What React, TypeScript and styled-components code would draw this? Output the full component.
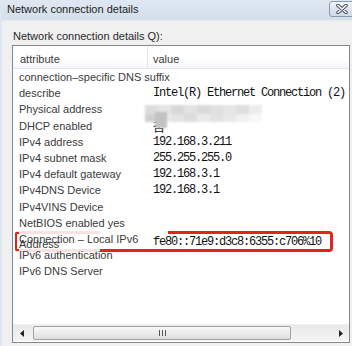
import React from "react";
import styled, { createGlobalStyle } from "styled-components";

const GlobalStyle = createGlobalStyle`
  html, body {
    margin: 0;
    padding: 0;
    width: 352px;
    height: 346px;
    overflow: hidden;
    background: #f0f0f0;
  }
  * { box-sizing: border-box; }
`;

const Window = styled.div`
  width: 352px;
  height: 346px;
  display: flex;
  flex-direction: column;
  background: #f0f0f0;
  border-left: 2px solid #dbe6f1;
  font-family: "Liberation Sans", Arial, sans-serif;
  overflow: hidden;
`;

const TitleBar = styled.div`
  height: 21px;
  display: flex;
  align-items: center;
  justify-content: space-between;
  padding-left: 5px;
  background: linear-gradient(#dfe8f2, #d4dfea);
  border-bottom: 1px solid #e4e9ef;
`;

const Title = styled.span`
  font-size: 11px;
  color: #222;
  margin-top: -3px;
`;

const CloseButton = styled.div`
  width: 27px;
  height: 16px;
  margin-top: -2px;
  margin-right: -4px;
  border: 1px solid #8a99ad;
  border-radius: 3px;
  background: linear-gradient(#f1f5f9, #dbe3ec 55%, #cfd9e4);
  display: flex;
  align-items: center;
  padding-left: 6px;
`;

const Body = styled.div`
  flex: 1;
  display: flex;
  flex-direction: column;
  padding: 9px 2px 3px 10px;
`;

const Caption = styled.div`
  font-size: 11px;
  line-height: 13px;
  color: #2a2a2a;
  margin-left: 1px;
`;

const ListBox = styled.div`
  margin-top: 2px;
  height: 298px;
  border: 1px solid #828790;
  background: #fff;
  display: flex;
  flex-direction: column;
`;

const HeaderRow = styled.div`
  height: 23px;
  display: grid;
  grid-template-columns: 135px 1fr;
  border-bottom: 1px solid #e3e5e8;
  background: linear-gradient(#ffffff, #ffffff 60%, #f6f7f9);
`;

const HeaderCell = styled.div<{ $divider?: boolean }>`
  display: flex;
  align-items: center;
  padding: 3px 0 0 ${(p) => (p.$divider ? 7 : 5)}px;
  font-size: 11px;
  color: #3a3a3a;
  border-right: ${(p) => (p.$divider ? "1px solid #e3e5e8" : "none")};
`;

const Rows = styled.div`
  flex: 1;
  display: flex;
  flex-direction: column;
`;

const Row = styled.div`
  position: relative;
  height: 16.2px;
  display: grid;
  grid-template-columns: 135px 1fr;
  grid-template-rows: 16.2px;
  align-items: center;
`;

const AttrCell = styled.div<{ $wrap?: boolean }>`
  padding-left: 6px;
  font-size: 11px;
  color: #3b3b3b;
  white-space: ${(p) => (p.$wrap ? "normal" : "nowrap")};
  line-height: ${(p) => (p.$wrap ? "5px" : "16px")};
  align-self: ${(p) => (p.$wrap ? "start" : "center")};
  padding-top: ${(p) => (p.$wrap ? "6px" : "0")};
`;

const ValueCell = styled.div<{ $shift?: number }>`
  position: relative;
  top: ${(p) => p.$shift ?? 0}px;
  min-height: 16px;
  padding-left: 5px;
  font-family: "Liberation Mono", "Noto Sans CJK SC", monospace;
  font-size: 12px;
  letter-spacing: -1.2px;
  line-height: 16px;
  color: #111;
  white-space: nowrap;
`;

const Mosaic = styled.div`
  position: absolute;
  z-index: 1;
  left: -3px;
  top: 4px;
  width: 117px;
  height: 17px;
  display: grid;
  grid-template-columns: repeat(9, 1fr);
  grid-template-rows: repeat(2, 1fr);
  filter: blur(1.2px);
`;

const Tile = styled.div<{ $shade: string }>`
  background: ${(p) => p.$shade};
`;

const DarkTile = styled.div`
  position: absolute;
  z-index: 2;
  left: 7px;
  top: 11px;
  width: 12px;
  height: 16px;
  background: #c2c2c2;
  filter: blur(0.8px);
`;

const RedBox = styled.div`
  position: absolute;
  left: 87px;
  top: 0;
  width: 233px;
  height: 21px;
  border: 3px solid #e3241d;
  border-left: none;
  border-radius: 0 4px 4px 0;
  pointer-events: none;
`;

const WhiteOut = styled.div`
  position: absolute;
  left: 87px;
  top: 0;
  width: 68px;
  height: 3px;
  background: #fff;
`;

const FaintLine = styled.div<{ $bottom?: boolean }>`
  position: absolute;
  left: 3px;
  width: 84px;
  height: 3px;
  top: ${(p) => (p.$bottom ? "18px" : "0")};
  background: rgba(235, 120, 110, 0.22);
`;

const Bracket = styled.div`
  position: absolute;
  left: 2px;
  top: 1px;
  width: 4px;
  height: 19px;
  border: 2px solid #e3241d;
  border-right: none;
  border-radius: 2px 0 0 2px;
`;

const HScroll = styled.div`
  height: 17px;
  display: flex;
  align-items: stretch;
  background: linear-gradient(#eaeaea, #f3f3f3);
  border-top: 1px solid #f0f0f0;
  margin-bottom: 1px;
`;

const ArrowButton = styled.div`
  width: 17px;
  display: flex;
  align-items: center;
  justify-content: center;
`;

const Track = styled.div`
  flex: 1;
  display: flex;
  align-items: stretch;
  padding: 1px 0 1px 3px;
`;

const Thumb = styled.div`
  width: 258px;
  border: 1px solid #a3a3a3;
  border-radius: 2px;
  background: linear-gradient(#f7f7f7, #ececec 50%, #dcdcdc);
  display: flex;
  align-items: center;
  justify-content: center;
  gap: 2px;
`;

const Grip = styled.span`
  width: 1px;
  height: 6px;
  background: #555;
`;

const shades = [
  "#dcdcdc", "#e4e4e4", "#d8d8d8", "#e2e2e2", "#dadada", "#e0e0e0", "#e6e6e6", "#dedede", "#ececec",
  "#d0d0d0", "#eaeaea", "#e4e4e4", "#dcdcdc", "#ebebeb", "#e2e2e2", "#e8e8e8", "#f0f0f0", "#f8f8f8",
];

type Item = { attr: string; value?: string; kind?: "blur" | "highlight" };

const items: Item[] = [
  { attr: "connection–specific DNS suffix" },
  { attr: "describe", value: "Intel(R) Ethernet Connection (2)" },
  { attr: "Physical address", kind: "blur" },
  { attr: "DHCP enabled", value: "否" },
  { attr: "IPv4 address", value: "192.168.3.211" },
  { attr: "IPv4 subnet mask", value: "255.255.255.0" },
  { attr: "IPv4 default gateway", value: "192.168.3.1" },
  { attr: "IPv4DNS Device", value: "192.168.3.1" },
  { attr: "IPv4VINS Device" },
  { attr: "NetBIOS enabled yes" },
  { attr: "Connection – Local IPv6 Address", value: "fe80::71e9:d3c8:6355:c706%10", kind: "highlight" },
  { attr: "IPv6 authentication" },
  { attr: "IPv6 DNS Server" },
];

const CloseGlyph = () => (
  <svg width="12" height="10" viewBox="0 0 12 10">
    <path d="M2 1.5 L10 8.5 M10 1.5 L2 8.5" stroke="#4a5260" strokeWidth="3.6" strokeLinecap="round" />
    <path d="M2 1.5 L10 8.5 M10 1.5 L2 8.5" stroke="#ffffff" strokeWidth="1.6" strokeLinecap="round" />
  </svg>
);

const Arrow = ({ dir }: { dir: "left" | "right" }) => (
  <svg width="4" height="7" viewBox="0 0 4 7">
    <path d={dir === "left" ? "M4 0 L0 3.5 L4 7 Z" : "M0 0 L4 3.5 L0 7 Z"} fill="#222" />
  </svg>
);

export default function App() {
  return (
    <>
      <GlobalStyle />
      <Window>
        <TitleBar>
          <Title>Network connection details</Title>
          <CloseButton>
            <CloseGlyph />
          </CloseButton>
        </TitleBar>
        <Body>
          <Caption>Network connection details Q):</Caption>
          <ListBox>
            <HeaderRow>
              <HeaderCell $divider>attribute</HeaderCell>
              <HeaderCell>value</HeaderCell>
            </HeaderRow>
            <Rows>
              {items.map((it) => (
                <Row key={it.attr}>
                  <AttrCell $wrap={it.kind === "highlight"}>{it.attr}</AttrCell>
                  <ValueCell $shift={it.kind === "highlight" ? 3 : it.value === "否" ? 3 : 0}>
                    {it.value}
                    {it.kind === "blur" && (
                      <>
                        <Mosaic>
                          {shades.map((s, i) => (
                            <Tile key={i} $shade={s} />
                          ))}
                        </Mosaic>
                        <DarkTile />
                      </>
                    )}
                  </ValueCell>
                  {it.kind === "highlight" && (
                    <>
                      <FaintLine />
                      <FaintLine $bottom />
                      <RedBox />
                      <WhiteOut />
                      <Bracket />
                    </>
                  )}
                </Row>
              ))}
            </Rows>
            <HScroll>
              <ArrowButton>
                <Arrow dir="left" />
              </ArrowButton>
              <Track>
                <Thumb>
                  <Grip />
                  <Grip />
                  <Grip />
                </Thumb>
              </Track>
              <ArrowButton>
                <Arrow dir="right" />
              </ArrowButton>
            </HScroll>
          </ListBox>
        </Body>
      </Window>
    </>
  );
}
